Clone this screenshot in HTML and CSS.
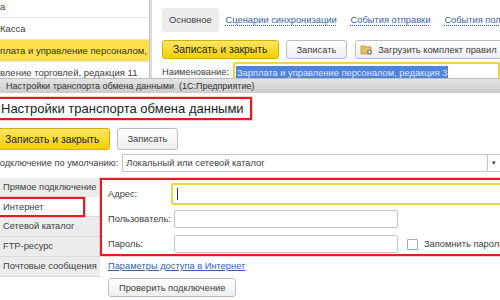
FILE: index.html
```html
<!DOCTYPE html>
<html lang="ru">
<head>
  <meta charset="UTF-8">
  <title>Настройки транспорта обмена данными</title>
  <link rel="stylesheet" href="styles.css">
</head>
<body>

  <!-- Background window: list + exchange node form -->
  <div class="bg-window">
    <div class="list">
      <div class="list-row">а</div>
      <div class="list-row">Касса</div>
      <div class="list-row current">плата и управление персоналом, ...</div>
      <div class="list-row">вление торговлей, редакция 11</div>
    </div>
    <div class="splitter"></div>
    <div class="form">
      <div class="form-tabs">
        <span class="tab current">Основное</span>
        <span class="tab link">Сценарии синхронизации</span>
        <span class="tab link">События отправки</span>
        <span class="tab link">События получения</span>
      </div>
      <div class="toolbar">
        <button class="btn btn-default">Записать и закрыть</button>
        <button class="btn">Записать</button>
        <button class="btn btn-icon">
          <svg width="14" height="13" viewBox="0 0 14 13">
            <path d="M1 3h4l1 1h5v7H1z" fill="#e6c069" stroke="#b58a2e" stroke-width="0.8"/>
            <circle cx="9.5" cy="9" r="2.6" fill="#8a8f98"/>
            <circle cx="9.5" cy="9" r="1" fill="#fff"/>
          </svg>
          Загрузить комплект правил
        </button>
      </div>
      <div class="field-row">
        <span class="field-label">Наименование:</span>
        <div class="input focused"><span class="selection">Зарплата и управление персоналом, редакция 3</span></div>
      </div>
    </div>
  </div>

  <!-- Transport settings dialog -->
  <div class="dialog">
    <div class="titlebar">Настройки транспорта обмена данными  (1С:Предприятие)</div>
    <div class="dialog-body">
      <div class="dialog-title marked">Настройки транспорта обмена данными</div>

      <div class="toolbar dialog-toolbar">
        <button class="btn btn-default">Записать и закрыть</button>
        <button class="btn">Записать</button>
      </div>

      <div class="select-row">
        <span class="select-label">Подключение по умолчанию:</span>
        <div class="select">
          <span class="select-value">Локальный или сетевой каталог</span>
          <span class="select-arrow">&#9662;</span>
        </div>
      </div>

      <div class="pages">
        <div class="page-tabs">
          <div class="page-tab">Прямое подключение</div>
          <div class="page-tab current"><span class="marked">Интернет</span></div>
          <div class="page-tab">Сетевой каталог</div>
          <div class="page-tab">FTP-ресурс</div>
          <div class="page-tab">Почтовые сообщения</div>
        </div>

        <div class="page">
          <div class="fields marked">
            <span class="field-label">Адрес:</span>
            <div class="input focused wide"><span class="caret"></span></div>

            <span class="field-label">Пользователь:</span>
            <div class="input"></div>

            <span class="field-label">Пароль:</span>
            <div class="input-line">
              <div class="input"></div>
              <label class="check"><span class="check-box"></span>Запомнить пароль</label>
            </div>
          </div>
          <div class="page-link">Параметры доступа в Интернет</div>
          <button class="btn check-btn">Проверить подключение</button>
        </div>
      </div>
    </div>
  </div>

</body>
</html>
```

FILE: styles.css
```css
* {
  box-sizing: border-box;
}

body {
  margin: 0;
  width: 500px;
  height: 300px;
  overflow: hidden;
  font-family: "Liberation Sans", Arial, sans-serif;
  font-size: 9.3px;
  color: #404040;
  background-color: #fff;
}

button {
  font-family: inherit;
  font-size: inherit;
  color: inherit;
}

/* Background window */
.bg-window {
  display: flex;
  height: 78px;
  overflow: hidden;
}

.list {
  flex: none;
  width: 149px;
  margin-top: -4px;
  font-size: 9.5px;
}

.list-row {
  height: 22px;
  line-height: 21px;
  border-bottom: 1px solid #e2e2e2;
  white-space: nowrap;
  overflow: hidden;
}

.list-row.current {
  background-color: #fce04b;
  color: #333;
}

.splitter {
  flex: none;
  width: 3px;
  background-color: #dcdcdc;
  border-left: 1px solid #c2c2c2;
}

.form {
  flex: 1;
  min-width: 0;
  padding: 8px 0 0 10px;
  white-space: nowrap;
  overflow: hidden;
}

.form-tabs {
  display: flex;
  height: 24px;
  align-items: center;
}

.tab {
  padding: 0 7px;
  line-height: 24px;
  flex: none;
}

.tab.current {
  background-color: #ececec;
  border-radius: 3px;
}

.tab.link {
  color: #3461b0;
  text-decoration: underline dotted;
  text-underline-offset: 2px;
}

/* Buttons */
.toolbar {
  display: flex;
  gap: 7px;
  margin-top: 8px;
}

.btn {
  flex: none;
  height: 19px;
  padding: 0 10px;
  border: 1px solid #bcbcbc;
  border-radius: 3px;
  background: linear-gradient(#ffffff, #eeeeee);
  white-space: nowrap;
}

.btn-default {
  border-color: #d3b100;
  background: linear-gradient(#fbe567, #f2d000);
  color: #262626;
  font-size: 10.4px;
}

.btn-icon {
  display: flex;
  align-items: center;
  gap: 4px;
  margin-left: 1px;
  padding-left: 4px;
}

.field-row {
  display: flex;
  align-items: flex-start;
  margin-top: 3px;
}

.field-row .field-label {
  width: 71px;
  padding-top: 5px;
}

.input {
  height: 18px;
  border: 1px solid #c4c4c4;
  border-radius: 2px;
  background-color: #fff;
}

.input.focused {
  border: 2px solid #f3d43a;
}

.field-row .input {
  flex: 1;
  height: 22px;
  padding: 2px 1px;
}

.selection {
  display: inline-block;
  background-color: #4f82dc;
  color: #dfe8fb;
  padding: 0 1px;
  line-height: 14px;
}

/* Dialog */
.titlebar {
  height: 15px;
  line-height: 14px;
  padding-left: 6px;
  font-size: 9px;
  color: #303030;
  white-space: pre;
  background: linear-gradient(#e4e4e4, #cbcbcb);
  border-top: 1px solid #bdbdbd;
}

.dialog-body {
  margin-left: -4px;
  padding-top: 4px;
}

.marked {
  border: 2px solid #df1d24;
  box-shadow: 0 0 0 1px rgba(240, 120, 120, 0.35);
}

.dialog-title {
  width: 256px;
  height: 23px;
  padding-left: 3px;
  font-size: 13px;
  line-height: 19px;
  color: #222;
  white-space: nowrap;
  overflow: hidden;
}

.dialog-toolbar {
  margin: 8px 0 0 -1px;
}

.dialog-toolbar .btn {
  height: 22px;
}

.dialog-toolbar .btn-default {
  padding: 0 9px;
}

.select-row {
  display: flex;
  align-items: center;
  margin: 4px 0 0 -3px;
  gap: 4px;
}

.select {
  flex: 1;
  display: flex;
  height: 18px;
  border: 1px solid #c4c4c4;
  border-right: none;
}

.select-value {
  flex: 1;
  padding-left: 3px;
  line-height: 16px;
}

.select-arrow {
  width: 13px;
  border-left: 1px solid #c4c4c4;
  text-align: center;
  font-size: 7px;
  line-height: 16px;
}

.pages {
  display: flex;
  margin: 6px 0 0 1px;
}

.page-tabs {
  flex: none;
  width: 103px;
  background-color: #ececec;
  align-self: flex-start;
}

.page-tab {
  height: 20px;
  line-height: 19px;
  padding-left: 6px;
  border-bottom: 1px solid #dadada;
  white-space: nowrap;
}

.page-tab.current {
  background-color: #fff;
  padding-left: 0;
}

.page-tab.current .marked {
  display: block;
  width: 88px;
  height: 20px;
  margin-top: -1px;
  padding-left: 4px;
  line-height: 16px;
}

.page {
  flex: 1;
  min-width: 0;
}

.fields {
  display: grid;
  grid-template-columns: 66px 1fr;
  row-gap: 7px;
  align-items: center;
  padding: 5px 0 1px 6px;
  margin-right: -12px;
}

.fields .input {
  width: 224px;
}

.fields .input.wide {
  width: auto;
  height: 22px;
  margin: -2px 0 -2px -3px;
  padding: 3px 4px;
}

.caret {
  display: block;
  width: 1px;
  height: 12px;
  background-color: #333;
}

.input-line {
  display: flex;
  align-items: center;
  gap: 9px;
}

.check {
  display: flex;
  align-items: center;
  gap: 6px;
  white-space: nowrap;
}

.check-box {
  width: 11px;
  height: 11px;
  border: 1px solid #a9a9a9;
  border-radius: 1px;
  background-color: #fff;
}

.page-link {
  margin: 5px 0 0 8px;
  color: #3461b0;
  text-decoration: underline;
}

.check-btn {
  display: block;
  height: 19px;
  margin: 7px 0 0 8px;
  padding: 0 10px;
}
```
